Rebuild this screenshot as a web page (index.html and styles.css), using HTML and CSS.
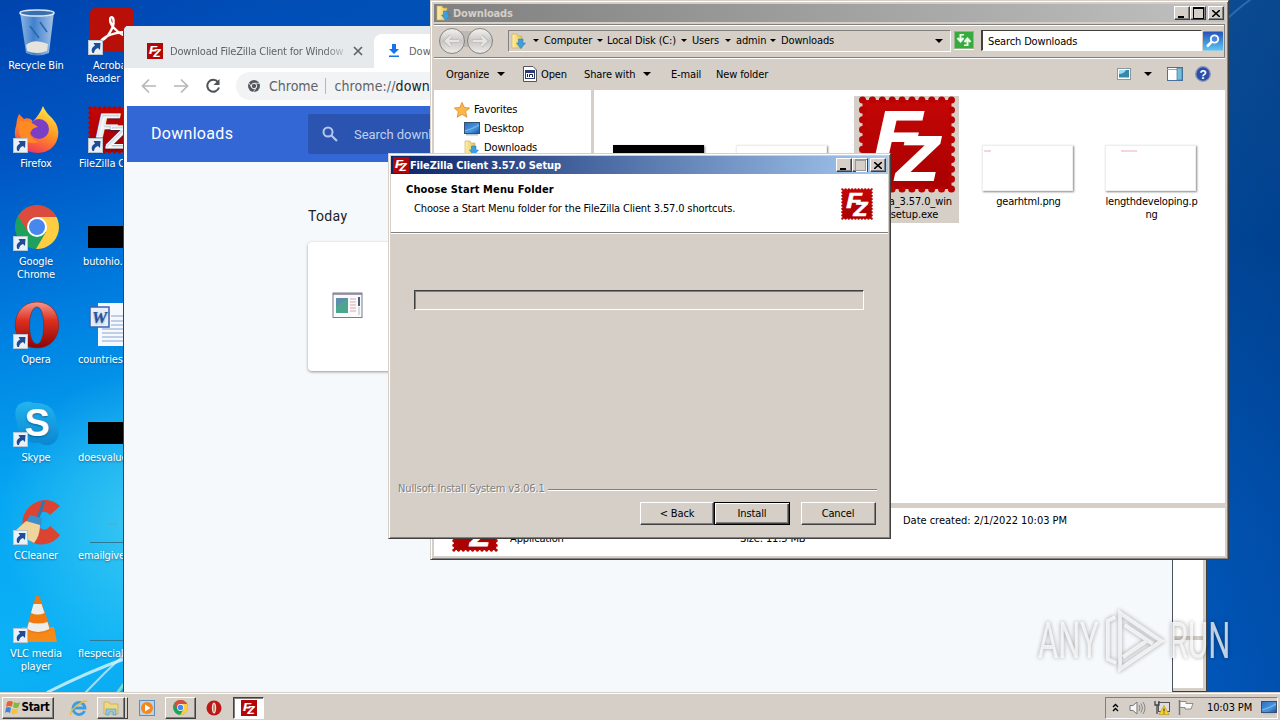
FILE: index.html
```
<!DOCTYPE html>
<html lang="en">
<head>
<meta charset="utf-8">
<title>Desktop</title>
<link rel="stylesheet" href="styles.css">
</head>
<body>
<svg width="0" height="0" class="defs">
  <defs>
    <linearGradient id="gRed" x1="0" y1="0" x2="0" y2="1"><stop offset="0" stop-color="#c40606"/><stop offset="1" stop-color="#a80000"/></linearGradient>
    <linearGradient id="gFire" x1=".7" y1="0" x2=".3" y2="1"><stop offset="0" stop-color="#ffe84a"/><stop offset=".5" stop-color="#ff9422"/><stop offset="1" stop-color="#f0305a"/></linearGradient>
    <linearGradient id="gOpera" x1="0" y1="0" x2="0" y2="1"><stop offset="0" stop-color="#f49a90"/><stop offset=".4" stop-color="#dd3020"/><stop offset="1" stop-color="#8a0505"/></linearGradient>
    <linearGradient id="gFolder" x1="0" y1="0" x2="1" y2="0"><stop offset="0" stop-color="#fff0a8"/><stop offset="1" stop-color="#e6c05a"/></linearGradient>
    <linearGradient id="gBin" x1="0" y1="0" x2="1" y2="0"><stop offset="0" stop-color="#a9c8e8"/><stop offset=".4" stop-color="#4c8bd2"/><stop offset="1" stop-color="#c2d8ee"/></linearGradient>
    <linearGradient id="gSky" x1="0" y1="0" x2="0" y2="1"><stop offset="0" stop-color="#22b4ee"/><stop offset="1" stop-color="#0a86d2"/></linearGradient>
    <linearGradient id="gNav" x1="0" y1="0" x2="0" y2="1"><stop offset="0" stop-color="#f4f3f1"/><stop offset=".5" stop-color="#c9c7c4"/><stop offset="1" stop-color="#eeedea"/></linearGradient>
    <linearGradient id="gScreen" x1="0" y1="0" x2="1" y2="1"><stop offset="0" stop-color="#2a6cc0"/><stop offset=".6" stop-color="#4a97e0"/><stop offset="1" stop-color="#1a4c98"/></linearGradient>
    <symbol id="fz" viewBox="0 0 97 97">
      <rect x="4" y="4" width="89" height="89" fill="url(#gRed)"/>
      <rect x="4" y="4" width="89" height="89" fill="none" stroke="#b80303" stroke-width="7" stroke-linecap="round" stroke-dasharray="0.1 9.789"/>
      <text x="16" y="62" class="fz-letter" font-size="66" stroke-width="2" textLength="47" lengthAdjust="spacingAndGlyphs">F</text>
      <text x="38" y="84" class="fz-letter" font-size="63" stroke-width="2" textLength="42" lengthAdjust="spacingAndGlyphs">Z</text>
    </symbol>
    <symbol id="fzs" viewBox="0 0 16 16">
      <rect width="16" height="16" fill="#b30606"/>
      <text x="2" y="10.8" class="fz-letter" font-size="11.5" stroke-width=".2" textLength="8" lengthAdjust="spacingAndGlyphs">F</text>
      <text x="6.500" y="14" class="fz-letter" font-size="10" stroke-width=".2" textLength="7" lengthAdjust="spacingAndGlyphs">Z</text>
    </symbol>
    <symbol id="cut" viewBox="0 0 15 15">
      <rect x=".5" y=".5" width="14" height="14" fill="#e9f1f8" stroke="#b9c6d2"/>
      <path d="M4.500 13 Q2 8 7 5.500 L5.500 3 L12.500 3 L12 10 L10 8 Q6.500 9 6 13Z" fill="#1f4c94"/>
    </symbol>
    <symbol id="chrome" viewBox="0 0 44 44">
      <circle cx="22" cy="22" r="22" fill="#1fa15d"/>
      <path d="M3 11 A22 22 0 0 1 41.500 12 L22 12 L12 25Z" fill="#dc4b3e"/>
      <path d="M22 12 H41.500 A22 22 0 0 1 21 44 L31 27Z" fill="#ffcd42"/>
      <circle cx="22" cy="22" r="10" fill="#fff"/><circle cx="22" cy="22" r="8" fill="#4787ee"/>
    </symbol>
    <symbol id="folderdl" viewBox="0 0 16 16">
      <path d="M1 1 L6 1 L7 3 L11 3 L11 15 L1 15Z" fill="url(#gFolder)" stroke="#c9a750" stroke-width=".6"/>
      <path d="M7.500 6 H12 V10 H14.500 L9.800 15.500 L5.500 10 H7.500Z" fill="#3aa0de" stroke="#1c78b8" stroke-width=".5"/>
    </symbol>
    <symbol id="monitor" viewBox="0 0 16 14">
      <rect x=".5" y=".5" width="15" height="11" fill="url(#gScreen)" stroke="#35506e"/><path d="M1 9 Q8 7 15 3" stroke="#9cd0f5" stroke-width=".7" fill="none"/><rect x="2" y="12" width="12" height="1.500" fill="#b8c4d0"/>
    </symbol>
  </defs>
</svg>

<main class="desktop">
  <svg class="wallpaper" width="1280" height="692" viewBox="0 0 1280 692">
    <g fill="none" stroke="#d9f6ff" stroke-linecap="round">
      <path d="M48 692 Q88 672 124 659" stroke-width="3" opacity=".8"/>
      <path d="M86 692 Q105 672 124 655" stroke-width="2" opacity=".7"/>
      <path d="M118 692 L124 684" stroke="#a8f0b8" stroke-width="3" opacity=".7"/>
      <path d="M1228 18 Q1240 7 1250 0" stroke="#4c8cc8" stroke-width="2" opacity=".5"/>
    </g>
  </svg>

  <section class="icons">
    <div class="icon"><svg viewBox="0 0 48 48"><path d="M8 4 L42 4 L37 45 Q25 50 14 45Z" fill="url(#gBin)" opacity=".85"/><ellipse cx="25" cy="5" rx="17" ry="3" fill="#3a6fae" stroke="#dce8f2" stroke-width="1.500"/><path d="M14 37 Q22 30 36 36 L35 43 Q25 47 15 43Z" fill="#e6e3dc"/><path d="M28 14 L35 24 M18 18 L27 30" stroke="#2566ad" stroke-width="1.500"/></svg><span>Recycle Bin</span></div>
    <div class="icon"><svg viewBox="0 0 48 48"><path d="M5 25 Q3 16 7 8 L12 13 Q16 11 20 14 L21 24Z" fill="#ff7a26"/><path d="M20 16 Q27 10 31 0 Q34 7 40 12 Q48 21 46 31 Q42 46 26 47 Q6 46 3 30 Q2 24 5 18Z" fill="url(#gFire)"/><circle cx="27" cy="23" r="10" fill="#7a3fc4"/><path d="M8 15 Q18 14 26 21 Q19 22 18 28 Q19 34 27 36 Q12 40 7 28Z" fill="#ff8a24"/></svg><svg class="cut"><use href="#cut"/></svg><span>Firefox</span></div>
    <div class="icon"><svg viewBox="0 0 48 48"><use href="#chrome" x="3" y="1" width="44" height="44"/></svg><svg class="cut"><use href="#cut"/></svg><span>Google<br>Chrome</span></div>
    <div class="icon"><svg viewBox="0 0 48 48"><path fill-rule="evenodd" d="M25 0 C54 0 54 46 25 46 C-4 46 -4 0 25 0Z M25 5 C15 5 15 42 25 42 C34 42 34 5 25 5Z" fill="url(#gOpera)" stroke="#8c1c18" stroke-width=".6"/></svg><svg class="cut"><use href="#cut"/></svg><span>Opera</span></div>
    <div class="icon"><svg viewBox="0 0 48 48"><path d="M6 5 Q14 -1 22 3 Q44 2 45 25 Q50 38 40 44 Q34 47 28 43 Q5 44 5 22 Q1 12 6 5Z" fill="url(#gSky)"/><text x="25" y="36" class="skype" text-anchor="middle">S</text></svg><svg class="cut"><use href="#cut"/></svg><span>Skype</span></div>
    <div class="icon"><svg viewBox="0 0 48 48"><path d="M48 8 Q36 -3 21 6 Q8 15 11 31 Q16 49 34 46 Q43 44 48 37 L38 28 Q34 34 28 30 Q22 24 27 16 Q33 11 38 17Z" fill="#da4430"/><path d="M32 3 L26 20" stroke="#2d78b4" stroke-width="3"/><path d="M18 17 L30 20 L29 28 L14 24Z" fill="#3d8fc9"/><path d="M14 23 L28 27 Q28 38 22 45 L2 34Z" fill="#efd49c"/></svg><svg class="cut"><use href="#cut"/></svg><span>CCleaner</span></div>
    <div class="icon"><svg viewBox="0 0 48 48"><path d="M10 31 L42 31 L45 46 L8 46Z" fill="#f58a1a"/><path d="M24 0 Q26 -1 28 2 L39 34 Q26 41 14 34Z" fill="#f07a10"/><path d="M21.500 8 H29.500 L32.500 17 Q26 20 19 17Z M17 26 Q26 29 35.500 26 L37.500 33 Q26 39 15 33Z" fill="#eceeee"/></svg><svg class="cut"><use href="#cut"/></svg><span>VLC media<br>player</span></div>
  </section>

  <section class="icons second">
    <div class="icon"><svg viewBox="0 0 48 48"><rect x="2" y="0" width="44" height="43" rx="5" fill="#b80f08"/><path d="M13 33 C20 30 28 17 25 10 C22 7 20 13 26 20 C32 27 42 31 40 26 C37 22 18 26 13 33Z" fill="none" stroke="#fff" stroke-width="2.400"/></svg><svg class="cut"><use href="#cut"/></svg><span class="in15">Acroba</span><span class="in8">Reader</span></div>
    <div class="icon"><svg viewBox="0 0 48 48"><use href="#fz" width="48" height="48"/></svg><svg class="cut"><use href="#cut"/></svg><span class="in1">FileZilla C</span></div>
    <div class="icon"><svg viewBox="0 0 48 48"><rect y="22" width="48" height="22"/></svg><span class="in5">butohio.</span></div>
    <div class="icon"><svg viewBox="0 0 48 48"><rect x="10" y="1" width="38" height="43" fill="#f5f8fd"/><path d="M23 14H48M23 19H48M23 23H48M14 27H48M14 31H48M14 35H48M14 39H48" stroke="#8aa2d4"/><rect x="2" y="5" width="19" height="20" fill="#e7effa" stroke="#3b62b0" stroke-width="1.500"/><text x="11.500" y="21" text-anchor="middle" class="word">W</text></svg><span>countries</span></div>
    <div class="icon"><svg viewBox="0 0 48 48"><rect y="22" width="48" height="22"/></svg><span>doesvalue</span></div>
    <div class="icon"><svg viewBox="0 0 48 48"><path d="M20 26h10" stroke="#5aa8c8"/><path d="M2 44.500H48" stroke="#2d7a98"/></svg><span>emailgive</span></div>
    <div class="icon"><svg viewBox="0 0 48 48"><path d="M2 44.500H48" stroke="#2d7a98"/></svg><span>flespeciall</span></div>
  </section>

  <section class="window backwin"><div class="back-split"></div></section>

  <section class="chrome">
    <div class="tabs">
      <div class="tab"><svg width="16" height="16"><use href="#fzs"/></svg><span class="tab-name">Download FileZilla Client for Window</span><svg class="close" width="10" height="10" viewBox="0 0 10 10"><path d="M1 1L9 9M9 1L1 9" stroke="#5f6368" stroke-width="1.700"/></svg></div>
      <div class="tab active"><svg width="12" height="14" viewBox="0 0 12 14"><path d="M4 0H8V5H11L6 10L1 5H4Z M1 11.500H11V13H1Z" fill="#1a73e8"/></svg><span>Downloads</span></div>
    </div>
    <div class="toolbar">
      <svg width="16" height="16" viewBox="0 0 16 16" class="tb"><path d="M15 8H2M8 1.500L1.500 8L8 14.500" stroke="#b5b7ba" stroke-width="1.700" fill="none"/></svg>
      <svg width="16" height="16" viewBox="0 0 16 16" class="tb"><path d="M1 8H14M8 1.500L14.500 8L8 14.500" stroke="#b5b7ba" stroke-width="1.700" fill="none"/></svg>
      <svg width="16" height="16" viewBox="0 0 16 16" class="tb"><path d="M13 4A6 6 0 1 0 14 9.500" stroke="#505357" stroke-width="2" fill="none"/><path d="M14.500 1V7H8.500Z" fill="#505357"/></svg>
      <div class="omnibox"><svg width="12" height="12" viewBox="0 0 12 12"><circle cx="6" cy="6" r="6" fill="#55595e"/><circle cx="6" cy="6" r="2.700" fill="#55595e" stroke="#eceef0"/><path d="M6 3.300H11.500M3.600 7.300L1 3M8.300 7.300L5.500 12" stroke="#eceef0" stroke-width=".8"/></svg><span class="origin">Chrome</span><i></i><span class="url">chrome://<b>down</b></span></div>
    </div>
    <div class="dl-head"><h1>Downloads</h1><div class="dl-search"><svg width="16" height="16" viewBox="0 0 16 16"><circle cx="6" cy="6" r="4.500" fill="none" stroke="#b4c6ee" stroke-width="2"/><path d="M9.500 9.500L15 15" stroke="#b4c6ee" stroke-width="2.200"/></svg><span>Search downloads</span></div></div>
    <div class="dl-body"><h2>Today</h2><div class="card"><svg width="31" height="27" viewBox="0 0 31 27"><rect x="1" y="1" width="29" height="24.500" fill="#fafafc" stroke="#7b7b8a"/><path d="M1 2H30" stroke="#8a7a96" stroke-width="1.500"/><rect x="4" y="6" width="12" height="15" fill="#4ca58c"/><path d="M4 6H16L4 14Z" fill="#5c8cae"/><path d="M18 7H24M18 10H24M18 13H24M18 16H24M18 19H24" stroke="#d8a6a6"/><path d="M27 5V14" stroke="#46607a" stroke-width="2"/><path d="M27 15V23" stroke="#d5dbe3" stroke-width="2"/></svg></div></div>
  </section>

  <section class="window explorer">
    <header class="title gray"><svg width="16" height="16"><use href="#folderdl"/></svg><span>Downloads</span><div class="ctl"><button class="min"></button><button class="max"></button><button class="x"><svg width="8" height="7" viewBox="0 0 8 7"><path d="M0 0L8 7M8 0L0 7" stroke="#000" stroke-width="1.600"/></svg></button></div></header>
    <div class="address">
      <svg class="nav" width="56" height="28" viewBox="0 0 56 28"><rect x="13" y="4" width="30" height="16" fill="#bdbab5"/><g fill="url(#gNav)" stroke="#85827e"><circle cx="14" cy="14" r="12.500"/><circle cx="42" cy="14" r="12.500"/></g><path d="M21 14H8M13 9L8 14L13 19M35 14H48M43 9L48 14L43 19" fill="none" stroke="#b8b5b1" stroke-width="4"/><path d="M21 14H8M13 9L8 14L13 19M35 14H48M43 9L48 14L43 19" fill="none" stroke="#e6e4e1" stroke-width="2.500"/></svg>
      <div class="crumbs"><svg width="16" height="16"><use href="#folderdl"/></svg><em class="c0"></em><span class="w1">Computer</span><em></em><span class="w2">Local Disk (C:)</span><em></em><span class="w3">Users</span><em></em><span class="w4">admin</span><em></em><span class="w5">Downloads</span><em class="last"></em></div>
      <div class="refresh"><svg width="20" height="18" viewBox="0 0 20 18"><rect x=".5" y=".5" width="19" height="17" fill="#35ac3c" stroke="#8fb98c"/><path d="M6.500 3V10M3.500 7L6.500 10.500L9.500 7M13.500 15V8M10.500 11L13.500 7.500L16.500 11" fill="none" stroke="#f0fff0" stroke-width="2"/><path d="M6.500 3.800H10M13.500 14.200H10" stroke="#f0fff0" stroke-width="1.500"/></svg></div>
      <div class="search">Search Downloads</div>
      <svg width="20" height="20" viewBox="0 0 20 19"><defs><linearGradient id="gs" x2="0" y2="1"><stop stop-color="#2450b8"/><stop offset="1" stop-color="#5cc8f5"/></linearGradient></defs><rect width="20" height="19" rx="1" fill="url(#gs)"/><circle cx="11.500" cy="7.500" r="3.700" fill="#4a88e0" stroke="#fff" stroke-width="1.800"/><path d="M8.500 10.500L4 15" stroke="#fff" stroke-width="2.500"/></svg>
    </div>
    <div class="commands">
      <span class="k1">Organize</span><em></em>
      <svg class="openi" width="14" height="16" viewBox="0 0 14 16"><path d="M.5 .5H10L13.500 4V15.500H.5Z" fill="#fff" stroke="#555"/><rect x="2" y="4" width="10" height="9" fill="#2a3978"/><path d="M3 7H11V12H3Z" fill="#fff"/><path d="M4.500 8V11M6.500 11V8.500H9.500V11" stroke="#223" fill="none"/></svg>
      <span class="k2">Open</span><span class="k3">Share with</span><em></em><span class="k4">E-mail</span><span class="k5">New folder</span>
      <div class="views"><svg width="14" height="12" viewBox="0 0 14 12"><rect x=".5" y=".5" width="13" height="11" fill="#fff" stroke="#8a979f"/><rect x="2" y="2" width="10" height="7.500" fill="#3389aa"/><path d="M2 2H9Q7 6 2 6Z" fill="#9edaf0"/></svg><em></em><svg width="16" height="14" viewBox="0 0 16 14"><rect x=".5" y=".5" width="15" height="13" fill="#fff" stroke="#48719b"/><path d="M0 2.500H10" stroke="#8ca9c2" /><rect x="10" y="1" width="5" height="12" fill="#76bdd8" stroke="#48719b" stroke-width=".7"/></svg><svg width="16" height="16" viewBox="0 0 16 16"><circle cx="8" cy="8" r="7.300" fill="#2c4da8" stroke="#8e98b4" stroke-width="1.300"/><text x="8" y="12.500" text-anchor="middle" class="help">?</text></svg></div>
    </div>
    <div class="panes">
      <nav><div class="fav"><svg width="16" height="16" viewBox="0 0 16 16"><path d="M8 .5L10.300 5.500L15.700 6L11.600 9.700L12.900 15.200L8 12.300L3.200 15.200L4.400 9.700L.3 6L5.700 5.500Z" fill="#fcb64a" stroke="#d98a24" stroke-width=".8"/></svg><span>Favorites</span></div><div><svg width="16" height="14"><use href="#monitor"/></svg><span>Desktop</span></div><div><svg width="16" height="16"><use href="#folderdl"/></svg><span>Downloads</span></div></nav>
      <div class="files">
        <div class="file"><div class="thumb black"></div></div>
        <div class="file"><div class="thumb"></div></div>
        <div class="file sel"><svg width="98" height="97"><use href="#fz"/></svg><span>filezilla_3.57.0_win<br>64-setup.exe</span></div>
        <div class="file"><div class="thumb"><i class="t1"></i></div><span>gearhtml.png</span></div>
        <div class="file"><div class="thumb"><i class="t2"></i></div><span>lengthdeveloping.p<br>ng</span></div>
      </div>
    </div>
    <footer><svg width="46" height="46"><use href="#fz"/></svg><span class="app">Application</span><span class="size">Size: 11.5 MB</span><span class="date">Date created: 2/1/2022 10:03 PM</span></footer>
  </section>

  <section class="window dialog">
    <header class="title blue"><svg width="16" height="16"><use href="#fzs"/></svg><span>FileZilla Client 3.57.0 Setup</span><div class="ctl"><button class="min"></button><button class="max off"></button><button class="x"><svg width="8" height="7" viewBox="0 0 8 7"><path d="M0 0L8 7M8 0L0 7" stroke="#000" stroke-width="1.600"/></svg></button></div></header>
    <div class="banner"><div><h3>Choose Start Menu Folder</h3><p>Choose a Start Menu folder for the FileZilla Client 3.57.0 shortcuts.</p></div><svg width="32" height="32"><use href="#fz"/></svg></div>
    <div class="dialog-body"><div class="field"></div><div class="brand"><span>Nullsoft Install System v3.06.1</span><hr></div><div class="buttons"><button>&lt; Back</button><button class="default">Install</button><button class="cancel">Cancel</button></div></div>
  </section>

  <div class="watermark"><span class="any">ANY</span><svg width="60" height="66" viewBox="0 0 64 66" preserveAspectRatio="none"><g fill="none" stroke="#fff" stroke-width="4" opacity=".75"><path d="M15 5L59 33L15 61Z"/><path d="M20 17L50 36M18 49L43 33"/><path d="M10 9L2 13V51L11 55"/></g></svg><span class="run">RUN</span></div>

  <footer class="taskbar">
    <div class="start"><svg width="18" height="16" viewBox="0 0 18 16"><path d="M3 2Q6 0 9 2L7.500 7Q5 5 2 7Z" fill="#e8622c"/><path d="M10 2Q13 4 16 2L14.500 7Q12 9 9 7Z" fill="#7fbb3c"/><path d="M2 8Q4 6 7 8L6 13Q3 11 1 13Z" fill="#3c86d8"/><path d="M8.500 8.500Q11 10 14 8L13 13Q10 15 7 13.500Z" fill="#f4c435"/></svg>Start</div>
    <svg class="ie" width="18" height="18" viewBox="0 0 18 18"><path d="M14.500 12A6 6 0 1 1 15 9H4" fill="none" stroke="#3c9ede" stroke-width="2.800"/><path d="M1 16Q-1 12 8 6Q16 0 17 3" fill="none" stroke="#e8bd3c" stroke-width="1.500"/></svg>
    <div class="task t-folder"><svg width="18" height="16" viewBox="0 0 18 16"><path d="M2 2H7L8 4H16V14H2Z" fill="#f0d97e" stroke="#c0a658" stroke-width=".7"/><path d="M4 15V9H14V15H11V12H7V15Z" fill="#8ec9e6" stroke="#5597b8" stroke-width=".6"/></svg></div><div class="stack"></div>
    <svg class="wmp" width="16" height="16" viewBox="0 0 16 16"><rect x=".5" y=".5" width="15" height="15" fill="#b8d5ec" stroke="#5d8db8"/><circle cx="8" cy="8" r="6" fill="#f4871c"/><path d="M6 4.500L11.500 8L6 11.500Z" fill="#fff"/></svg>
    <div class="task"><svg width="15" height="15"><use href="#chrome"/></svg></div>
    <svg class="op" width="16" height="16" viewBox="0 0 16 16"><circle cx="8" cy="8" r="7.500" fill="#bd1717"/><ellipse cx="8" cy="8" rx="2.200" ry="5.500" fill="#f5d8d8"/><ellipse cx="8" cy="8" rx="1" ry="4" fill="#b96"/></svg>
    <div class="task pressed"><svg width="16" height="16"><use href="#fzs"/></svg></div>
    <div class="tray"><svg width="7" height="9" viewBox="0 0 7 9"><path d="M1 4L3.500 1.500L6 4M1 8L3.500 5.500L6 8" fill="none" stroke="#000" stroke-width="1.400"/></svg>
      <svg width="17" height="14" viewBox="0 0 17 14"><path d="M1 4.500H4L8 1V13L4 9.500H1Z" fill="#f6f6f6" stroke="#777"/><path d="M10 4Q12 7 10 10M12 2.500Q15 7 12 11.500M14 1Q18 7 14 13" fill="none" stroke="#888"/></svg>
      <svg width="16" height="15" viewBox="0 0 16 15"><rect x="4.500" y="2.500" width="11" height="9" fill="#ddd" stroke="#555"/><path d="M1 1V5H5V1M3 5V14" stroke="#444" stroke-width="1.300" fill="none"/><path d="M10 5.500L15 14.500H5Z" fill="#f7d32d" stroke="#b58c12" stroke-width=".6"/><path d="M10 8.500V11.500M10 12.500V13.500" stroke="#222"/></svg>
      <svg width="16" height="15" viewBox="0 0 16 15"><path d="M1.500 0V15" stroke="#777" stroke-width="1.500"/><path d="M2 1.500H8V3.500H15L13 9H7V7.500H2Z" fill="#fafafa" stroke="#777" stroke-width=".8"/></svg>
      <span>10:03 PM</span><svg width="16" height="14"><use href="#monitor"/></svg></div>
  </footer>
</main>
</body>
</html>
```
FILE: styles.css
```
* { box-sizing: border-box; }
body { margin: 0; overflow: hidden; font: 11px/13px "DejaVu Sans Condensed", "DejaVu Sans", sans-serif; font-stretch: condensed; letter-spacing: -.14px; color: #000; }
svg { display: block; flex: none; }
h1, h2, h3, p { margin: 0; }
span { white-space: nowrap; }
.defs { position: absolute; }
.fz-letter { font-family: "Liberation Sans", sans-serif; font-weight: bold; font-style: italic; fill: #fff; stroke: #fff; letter-spacing: 0; }
.skype { font: bold 38px "Liberation Sans", sans-serif; fill: #fff; }
.word { font: italic bold 17px "Liberation Serif", serif; fill: #27509c; }
.help { font: bold 12px "Liberation Sans", sans-serif; fill: #fff; }

.desktop { position: relative; width: 1280px; height: 720px; overflow: hidden;
  background: linear-gradient(90deg, transparent 130px, #0050b4 500px),
    radial-gradient(circle at 150px 520px, rgba(110,230,240,.5), transparent 150px),
    linear-gradient(165deg, #0044ae 0, #0056c4 160px, #0082e2 330px, #06a6f2 480px, #0cb2f6 640px, #0aa6ee 760px); }
.desktop::before { content: ""; position: absolute; left: 1000px; top: 0; width: 280px; height: 692px; background: linear-gradient(90deg, transparent 75%, rgba(0,40,110,.12)), linear-gradient(#0b4c92, #004595 240px, #0052b0 520px, #0056b8); }
.wallpaper { position: absolute; left: 0; top: 0; }

.icons { position: absolute; left: 0; top: 8px; width: 72px; display: grid; grid-auto-rows: 98px; color: #fff; }
.icon { position: relative; display: flex; flex-direction: column; align-items: center; text-align: center; text-shadow: 0 1px 2px #0358; }
.icon > svg:first-child { width: 48px; height: 48px; margin-bottom: 3px; }
.icon > .cut { position: absolute; left: 13px; top: 32px; width: 15px; height: 15px; }
.second { left: 78px; width: 46px; }
.second .icon { align-items: flex-start; }
.second .icon > svg:first-child { margin-left: 10px; }
.second .icon > .cut { left: 10px; }
.in15 { padding-left: 15px; } .in8 { padding-left: 8px; } .in1 { padding-left: 1px; } .in5 { padding-left: 5px; }

.window { position: absolute; background: #d5cfc8; border: 1px solid #d5cfc8; border-right-color: #404040; border-bottom-color: #404040; box-shadow: inset 1px 1px #fff, inset -1px -1px #808080; }
.backwin { left: 1120px; top: 400px; width: 87px; height: 292px; background: #fff; box-shadow: inset -3px -3px #d5cfc8; }
.back-split { margin-top: 235px; height: 4px; background: #d5cfc8; }

.chrome { position: absolute; left: 123px; top: 26px; width: 1050px; height: 666px; background: #f6f9fc; border-left: 1px solid #174a80; border-right: 1px solid #49515a; border-radius: 5px 5px 0 0; overflow: hidden; }
.tabs { height: 42px; padding-top: 8px; background: #e7eaed; display: flex; }
.tab { width: 250px; height: 34px; padding: 0 11px 0 23px; display: flex; align-items: center; color: #5f6368; font-size: 11px; letter-spacing: -.2px; }
.tab > svg:first-child { margin-right: 7px; }
.tab-name { width: 180px; -webkit-mask: linear-gradient(90deg, #000 86%, #0004 97%); }
.close { margin-left: 4px; }
.tab.active { background: #fff; border-radius: 8px 8px 0 0; padding-left: 14px; letter-spacing: 0; }
.tab.active > svg:first-child { margin-right: 9px; }
.toolbar { height: 38px; padding: 0 4px 2px 17px; background: #fff; display: flex; align-items: center; gap: 16px; }
.omnibox { flex: 1; height: 28px; margin-left: -1px; padding-left: 12px; border-radius: 14px; background: #f1f3f4; display: flex; align-items: center; color: #5f6368; font-size: 14px; letter-spacing: 0; }
.origin { margin-left: 9px; }
.omnibox i { width: 1px; height: 16px; margin: 0 8px 0 7px; background: #b5b7ba; }
.omnibox .url { letter-spacing: .1px; }
.omnibox b { font-weight: normal; color: #202124; }
.dl-head { height: 56px; margin: 0 0 0 3px; padding-left: 24px; background: #3367d6; display: flex; align-items: center; color: #fff; }
.dl-head h1 { width: 157px; font: 400 16px/20px Roboto, sans-serif; letter-spacing: .3px; }
.dl-search { width: 680px; height: 40px; padding-left: 14px; display: flex; align-items: center; gap: 16px; background: #2a54af; border-radius: 2px; color: #c0cfef; font: 13px Roboto, sans-serif; letter-spacing: -.05px; }
.dl-body { padding: 46px 0 0 184px; }
.dl-body h2 { font: 400 14px/16px Roboto, sans-serif; letter-spacing: .35px; color: #202124; }
.card { width: 680px; height: 129px; margin-top: 18px; padding: 50px 24px; background: #fff; border-radius: 4px; box-shadow: 0 1px 3px #0006; }

.title { height: 18px; display: flex; align-items: center; padding: 0 1px 0 2px; font-weight: bold; letter-spacing: -.14px; }
.title > span { margin-left: 1px; }
.gray { background: linear-gradient(90deg, #808080, #c0c0c0); color: #d5cfc8; }
.blue { background: linear-gradient(90deg, #0a246a, #a6caf0); color: #fff; }
.ctl { margin-left: auto; display: flex; }
.ctl button { width: 16px; height: 14px; padding: 0; border: 1px solid; border-color: #fff #404040 #404040 #fff; background: #d5cfc8; box-shadow: inset -1px -1px #808080; display: grid; place-items: center; }
.ctl .x { margin-left: 2px; }
.dialog .title { padding-right: 2px; }
.min::before { content: ""; width: 6px; height: 2px; background: #000; margin: 7px 2px 0 0; }
.max::before { content: ""; width: 9px; height: 9px; border: 1px solid #000; border-top-width: 2px; }
.off::before { border-color: #999; box-shadow: 1px 1px #fff; }

.explorer { left: 430px; top: 0; width: 799px; height: 560px; padding: 3px; }
.address { height: 34px; margin: 2px 0 0; padding: 0 1px 1px 4px; display: flex; align-items: center; border: 1px solid #808080; border-width: 1px 1px 1px 0; box-shadow: inset 0 1px #fff, 0 1px #fff; }
.crumbs { width: 443px; height: 22px; margin-left: 14px; padding-left: 2px; border: 1px solid; border-color: #808080 #fff #fff #808080; display: flex; align-items: center; }
.crumbs span { margin-left: 5px; }
em { width: 0; height: 0; margin-left: 5px; border: 3px solid transparent; border-top: 3px solid #000; border-bottom: 0; }
.crumbs em { margin-left: 6px; }
.crumbs em.c0 { margin-left: 6px; }
.crumbs em.last { margin-left: auto; margin-right: 7px; border-width: 4px 4px 0; }
.crumbs .w1 { width: 47px; } .crumbs .w2 { width: 68px; margin-left: 4px; } .crumbs .w3 { width: 27px; } .crumbs .w4 { width: 28px; }
.crumbs .w5 { margin-left: 5px; }
.refresh { margin-left: 3px; margin-right: 7px; border-bottom: 1px solid #fff; }
.search { flex: 1; height: 21px; margin-right: 1px; padding: 4px 5px; background: #fff; border: 2px solid; border-color: #404040 #fff #fff #404040; border-width: 1px 1px 1px 2px; }
.commands { height: 32px; padding-left: 12px; display: flex; align-items: center; }
.commands em { border-width: 4px 4px 0; margin-left: 7px; }
.k1 { width: 44px; } .openi { margin-left: 18px; } .k2 { width: 27px; margin-left: 4px; } .k3 { width: 52px; margin-left: 16px; } .k4 { width: 29px; margin-left: 20px; } .k5 { margin-left: 16px; }
.views { margin-left: auto; margin-right: 14px; display: flex; align-items: center; }
.views em { margin: 0 15px 0 13px; } .views svg:last-child { margin-left: 12px; }
.panes { height: 413px; display: flex; background: #fff; }
nav { width: 160px; padding: 10px 0 0 30px; border-right: 3px solid #d5cfc8; }
nav div { height: 19px; display: flex; align-items: center; gap: 4px; }
nav .fav { margin-left: -10px; }
.files { flex: 1; padding: 6px 0 0 14px; display: grid; grid-template-columns: repeat(5, 123px); align-items: start; overflow: hidden; }
.file { width: 105px; height: 127px; display: flex; flex-direction: column; align-items: center; text-align: center; letter-spacing: -.2px; }
.file > span { margin-top: 2px; line-height: 13px; }
.sel { background: #d5cfc8; letter-spacing: -.1px; }
.thumb { width: 91px; height: 46px; margin: 49px 4px 2px 0; border: 1px solid #eee; box-shadow: 1px 1px 2px #888; background: #fff; }
.file .thumb + span { margin: 2px 2px 0 0; }
.black { background: #000; border-color: #000; }
.thumb i { display: block; height: 2px; width: 7px; margin: 4px 0 0 1px; background: #f7d5da; }
.thumb .t2 { width: 16px; margin-left: 15px; }
.explorer footer { height: 53px; padding-left: 18px; border-top: 5px solid #d5cfc8; display: flex; background: #fff; }
.explorer footer span { line-height: 13px; }
.explorer footer svg { margin-top: -2px; }
.app { width: 56px; margin: 24px 0 0 12px; } .size { width: 65px; margin: 24px 0 0 174px; } .date { margin: 6px 0 0 98px; letter-spacing: -.02px; }

.dialog { left: 388px; top: 153px; width: 503px; height: 386px; padding: 2px; }
.banner { height: 59px; padding: 9px 15px 0; background: #fff; border-bottom: 1px solid #808080; box-shadow: 0 1px #fff; display: flex; justify-content: space-between; }
.banner h3 { font: bold 11px/13px "DejaVu Sans Condensed", sans-serif; letter-spacing: .12px; }
.banner p { margin: 6px 0 0 8px; }
.banner svg { margin-top: 5px; }
.dialog-body { padding: 57px 11px 0 8px; }
.field { height: 20px; margin: 0 13px 0 15px; border: 1px solid; border-color: #404040 #fff #fff #404040; box-shadow: inset 1px 1px #808080; }
.brand { margin-top: 172px; margin-left: -1px; display: flex; align-items: center; color: #808080; text-shadow: 1px 1px #fff; }
hr { flex: 1; height: 2px; margin: 3px 0 0 3px; border: 0; border-top: 1px solid #808080; border-bottom: 1px solid #fff; }
.buttons { display: flex; justify-content: flex-end; margin: 7px 1px 0 0; }
.buttons button { width: 74px; height: 23px; padding: 0; border: 1px solid; border-color: #fff #404040 #404040 #fff; background: #d5cfc8; box-shadow: inset -1px -1px #808080; font: inherit; letter-spacing: inherit; }
.buttons .default { width: 76px; border-color: #000; box-shadow: inset 1px 1px #fff, inset -1px -1px #404040, inset -2px -2px #808080; }
.buttons .cancel { width: 75px; margin-left: 11px; padding-right: 1px; }

.watermark { position: absolute; left: 1038px; top: 607px; display: flex; align-items: center; color: #ffffffc0; filter: drop-shadow(0 0 2px #0007); }
.watermark span { width: 64px; font: 400 50px/68px Roboto, sans-serif; letter-spacing: 0; transform-origin: 0 50%; transform: scaleX(.62); }
.watermark svg { margin: 0 3px 0 4px; }

.taskbar { position: absolute; left: 0; top: 692px; width: 1280px; height: 28px; padding: 4px 2px 2px; background: #d5cfc8; border-top: 1px solid #d5cfc8; box-shadow: inset 0 1px #fff; display: flex; align-items: center; }
.start, .task { height: 22px; border: 1px solid; border-color: #fff #404040 #404040 #fff; box-shadow: inset -1px -1px #808080; display: flex; align-items: center; justify-content: center; }
.start { width: 52px; padding-right: 3px; font-weight: bold; font-size: 11.500px; letter-spacing: -.3px; }
.ie { margin: 0 9px 0 16px; }
.task { width: 31px; }
.t-folder { width: 28px; }
.stack { width: 3px; height: 22px; border-right: 1px solid #404040; border-top: 1px solid #fff; border-bottom: 1px solid #404040; }
.wmp { margin: 0 10px 0 11px; } .op { margin: 0 11px 0 10px; }
.pressed { background: #fff; border-color: #404040 #fff #fff #404040; box-shadow: inset 1px 1px #808080; }
.tray { width: 173px; height: 22px; margin-left: auto; padding: 0 1px 0 6px; border: 1px solid; border-color: #808080 #fff #fff #808080; display: flex; align-items: center; }
.tray svg + svg { margin-left: 8px; } .tray svg:first-child + svg { margin-left: 10px; }
.tray span { width: 45px; margin: 0 9px 0 13px; }
```
